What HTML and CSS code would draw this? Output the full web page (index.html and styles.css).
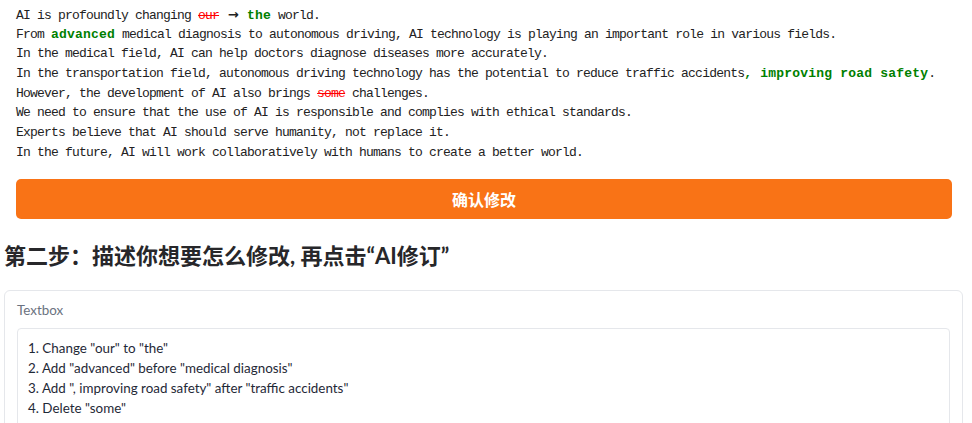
FILE: index.html
```html
<!DOCTYPE html>
<html lang="zh">
<head>
<meta charset="utf-8">
<title>AI修订</title>
<link rel="stylesheet" href="styles.css">
</head>
<body>
<div class="page">
  <section class="step-one">
    <div class="result">
      <div class="line">AI is profoundly changing <span class="del">our</span> <span class="arrow">→</span> <span class="ins">the</span> world.</div>
      <div class="line">From <span class="ins">advanced</span> medical diagnosis to autonomous driving, AI technology is playing an important role in various fields.</div>
      <div class="line">In the medical field, AI can help doctors diagnose diseases more accurately.</div>
      <div class="line">In the transportation field, autonomous driving technology has the potential to reduce traffic accidents<span class="ins">, improving road safety</span>.</div>
      <div class="line">However, the development of AI also brings <span class="del">some</span> challenges.</div>
      <div class="line">We need to ensure that the use of AI is responsible and complies with ethical standards.</div>
      <div class="line">Experts believe that AI should serve humanity, not replace it.</div>
      <div class="line">In the future, AI will work collaboratively with humans to create a better world.</div>
    </div>
    <button class="confirm" type="button">确认修改</button>
  </section>
  <h2 class="step-title">第二步：描述你想要怎么修改, 再点击“AI修订”</h2>
  <div class="panel">
    <div class="panel-label">Textbox</div>
    <div class="textarea">
      <div class="ta-line">1. Change "our" to "the"</div>
      <div class="ta-line">2. Add "advanced" before "medical diagnosis"</div>
      <div class="ta-line">3. Add ", improving road safety" after "traffic accidents"</div>
      <div class="ta-line">4. Delete "some"</div>
      <div class="ta-line">&nbsp;</div>
      <div class="ta-line">&nbsp;</div>
    </div>
  </div>
</div>
</body>
</html>
```

FILE: styles.css
```css
html, body {
  margin: 0;
  padding: 0;
  background: #ffffff;
}

.page {
  width: 972px;
  height: 423px;
  overflow: hidden;
}

.step-one {
  padding: 5px 20px 0 16px;
}

.result {
  font-family: "Liberation Mono", "DejaVu Sans Mono", monospace;
  font-size: 13px;
  letter-spacing: -0.8px;
  line-height: 19.7px;
  color: #222222;
}

.line {
  white-space: pre;
  height: 19.7px;
}

.del {
  color: #ff0000;
  text-decoration: line-through;
}

.ins {
  color: #008000;
  font-weight: bold;
  letter-spacing: 0.2px;
}

.arrow {
  display: inline-block;
  width: 14px;
  text-align: center;
  letter-spacing: 0;
  font-family: "DejaVu Sans", sans-serif;
  font-size: 13px;
  font-weight: bold;
}

.confirm {
  display: block;
  width: 100%;
  height: 40px;
  margin-top: 16px;
  border: none;
  border-radius: 5px;
  background: #f97316;
  color: #ffffff;
  font-family: "Noto Sans CJK SC", "Noto Sans", sans-serif;
  font-weight: 700;
  font-size: 16px;
  padding: 0;
  line-height: 38px;
}

.step-title {
  margin: 22px 0 19px 4px;
  font-family: "Lato", "Noto Sans CJK SC", sans-serif;
  font-size: 22px;
  font-weight: 700;
  line-height: 30px;
  color: #27272a;
}

.panel {
  margin: 0 9px 0 4px;
  border: 1px solid #e5e7eb;
  border-radius: 6px;
  padding: 9px 12px 0 12px;
  height: 200px;
}

.panel-label {
  font-family: "Lato", "Noto Sans", sans-serif;
  font-size: 13.4px;
  line-height: 20px;
  color: #6b7280;
  margin-bottom: 8px;
}

.textarea {
  border: 1px solid #e5e7eb;
  border-radius: 4px;
  padding: 9px 10px;
  font-family: "Lato", "Noto Sans", sans-serif;
  font-size: 13.4px;
  line-height: 20px;
  color: #1f2937;
}
```
